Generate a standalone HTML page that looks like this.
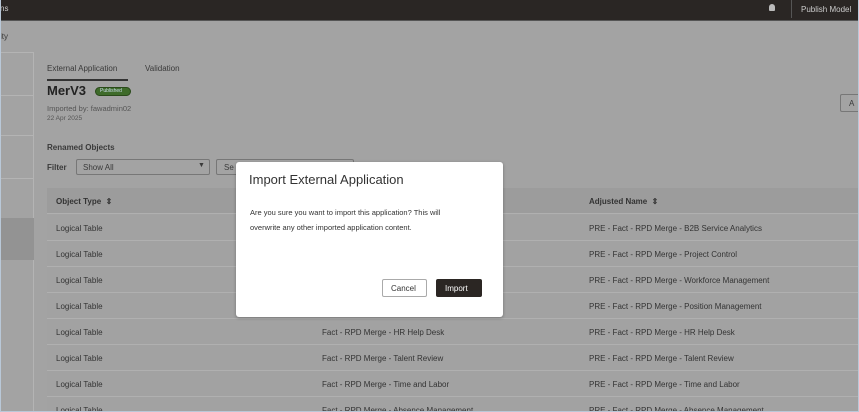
<!DOCTYPE html>
<html style="width:859px;height:412px;overflow:hidden"><head><style>
*{margin:0;padding:0;box-sizing:border-box}
body{width:859px;height:412px;overflow:hidden;background:#a3a3a3;font-family:"Liberation Sans",sans-serif;position:relative;color:#333}
.abs{position:absolute}
.top{left:0;top:0;width:859px;height:21px;background:#2a2624;border-bottom:1px solid #555}
.t{position:absolute;font-size:8px;color:#3a3a3a;white-space:nowrap}
.row{position:absolute;left:47px;width:812px;height:26px;border-bottom:1px solid #b0b0b0;background:#a2a2a2}
.row span{position:absolute;top:9px;font-size:8px;color:#333}
</style></head><body>
<div class="abs top"></div>
<div class="t" style="left:0;top:4px;color:#ccc">ns</div>
<div class="abs" style="left:769px;top:4px;width:6px;height:7px;border-radius:3px 3px 1px 1px;background:#bbb"></div>
<div class="abs" style="left:791px;top:0;width:68px;height:18px;border-left:1px solid #555"></div>
<div class="t" style="left:801px;top:5px;color:#ccc">Publish Model</div>
<div class="t" style="left:0;top:32px">ity</div>
<div class="abs" style="left:0;top:52px;width:34px;height:360px;border-right:1px solid #b4b4b4;border-top:1px solid #b4b4b4"></div>
<div class="abs" style="left:0;top:95px;width:34px;height:1px;background:#b4b4b4"></div>
<div class="abs" style="left:0;top:135px;width:34px;height:1px;background:#b4b4b4"></div>
<div class="abs" style="left:0;top:178px;width:34px;height:1px;background:#b4b4b4"></div>
<div class="abs" style="left:0;top:218px;width:34px;height:42px;background:#939393"></div>
<div class="t" style="left:47px;top:64px">External Application</div>
<div class="t" style="left:145px;top:64px">Validation</div>
<div class="abs" style="left:47px;top:79px;width:81px;height:2px;background:#333"></div>
<div class="t" style="left:47px;top:83px;font-size:13px;font-weight:bold;color:#222">MerV3</div>
<div class="abs" style="left:95px;top:87px;width:36px;height:9px;border-radius:5px;background:#3e6b2a;border:1px solid #2a4a1a"></div>
<div class="t" style="left:100px;top:88px;font-size:5px;color:#cde">Published</div>
<div class="t" style="left:47px;top:104px;font-size:7.5px;color:#555">Imported by: fawadmin02</div>
<div class="t" style="left:47px;top:115px;font-size:6.5px;color:#555">22 Apr 2025</div>
<div class="t" style="left:47px;top:143px;font-weight:bold">Renamed Objects</div>
<div class="t" style="left:47px;top:163px;font-weight:bold">Filter</div>
<div class="abs" style="left:76px;top:159px;width:134px;height:16px;border:1px solid #777;border-radius:2px"></div>
<div class="t" style="left:83px;top:163px">Show All</div>
<div class="t" style="left:198px;top:162px;font-size:7px">▼</div>
<div class="abs" style="left:216px;top:159px;width:138px;height:16px;border:1px solid #777;border-radius:2px"></div>
<div class="t" style="left:224px;top:163px">Se</div>
<div class="abs" style="left:840px;top:94px;width:19px;height:18px;border:1px solid #777;border-right:none;border-radius:2px 0 0 2px"></div>
<div class="t" style="left:849px;top:99px">A</div>
<div class="row" style="top:188px;background:#9c9c9c"><span style="left:9px;top:9px;font-weight:bold">Object Type &nbsp;⇕</span><span style="left:542px;font-weight:bold">Adjusted Name &nbsp;⇕</span></div>
<div class="row" style="top:215px"><span style="left:9px">Logical Table</span><span style="left:542px">PRE - Fact - RPD Merge - B2B Service Analytics</span></div>
<div class="row" style="top:241px"><span style="left:9px">Logical Table</span><span style="left:542px">PRE - Fact - RPD Merge - Project Control</span></div>
<div class="row" style="top:267px"><span style="left:9px">Logical Table</span><span style="left:542px">PRE - Fact - RPD Merge - Workforce Management</span></div>
<div class="row" style="top:293px"><span style="left:9px">Logical Table</span><span style="left:542px">PRE - Fact - RPD Merge - Position Management</span></div>
<div class="row" style="top:319px"><span style="left:9px">Logical Table</span><span style="left:275px">Fact - RPD Merge - HR Help Desk</span><span style="left:542px">PRE - Fact - RPD Merge - HR Help Desk</span></div>
<div class="row" style="top:345px"><span style="left:9px">Logical Table</span><span style="left:275px">Fact - RPD Merge - Talent Review</span><span style="left:542px">PRE - Fact - RPD Merge - Talent Review</span></div>
<div class="row" style="top:371px"><span style="left:9px">Logical Table</span><span style="left:275px">Fact - RPD Merge - Time and Labor</span><span style="left:542px">PRE - Fact - RPD Merge - Time and Labor</span></div>
<div class="row" style="top:397px;height:15px;overflow:hidden;border:none"><span style="left:9px">Logical Table</span><span style="left:275px">Fact - RPD Merge - Absence Management</span><span style="left:542px">PRE - Fact - RPD Merge - Absence Management</span></div>
<div class="abs" style="left:236px;top:162px;width:267px;height:155px;background:#fff;border-radius:3px;box-shadow:0 1px 3px rgba(0,0,0,.3)"></div>
<div class="t" style="left:249px;top:172px;font-size:13px;color:#333">Import External Application</div>
<div class="t" style="left:250px;top:208px;font-size:7.5px;color:#333">Are you sure you want to import this application? This will</div>
<div class="t" style="left:250px;top:223px;font-size:7.5px;color:#333">overwrite any other imported application content.</div>
<div class="abs" style="left:382px;top:279px;width:45px;height:18px;border:1px solid #aaa;border-radius:2px"></div>
<div class="t" style="left:391px;top:284px;color:#333">Cancel</div>
<div class="abs" style="left:436px;top:279px;width:46px;height:18px;background:#2b2623;border-radius:2px"></div>
<div class="t" style="left:445px;top:284px;color:#fff">Import</div>
<div class="abs" style="left:0;top:0;width:859px;height:412px;border:1px solid #b9c8d8;border-top:none"></div>
</body></html>
